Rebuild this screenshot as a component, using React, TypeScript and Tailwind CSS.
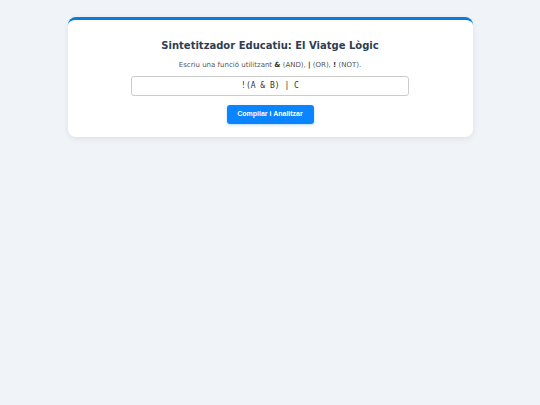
import React from "react";

export default function App() {
  return (
    <div className="min-h-[405px] bg-[#f0f4f8] pt-[17px]" style={{ fontFamily: '"DejaVu Sans", sans-serif' }}>
      <div className="mx-auto w-[405px] rounded-[8px] border-t-[3px] border-[#0a7bd8] bg-white shadow-[0_2px_6px_rgba(0,0,0,0.08)] px-[20px] pt-[19px] pb-[13px] flex flex-col items-center">
        <h1 className="text-[10px] font-bold text-[#2c3e50] leading-[14px]">Sintetitzador Educatiu: El Viatge Lògic</h1>
        <p className="mt-[7px] text-[7px] text-[#555] leading-[10px]">
          Escriu una funció utilitzant <b className="text-[#333]">&amp;</b> (AND), <b className="text-[#333]">|</b> (OR), <b className="text-[#333]">!</b> (NOT).
        </p>
        <div className="mt-[6px] w-[278px] h-[20px] rounded-[3px] border border-[#ccc] flex items-center justify-center text-[8px] text-[#333]" style={{ fontFamily: '"DejaVu Sans Mono", monospace' }}>
          !(A &amp; B) | C
        </div>
        <button className="mt-[9px] w-[87px] h-[19px] rounded-[3px] bg-[#0a84ff] text-white text-[7px] font-bold shadow-[0_1px_3px_rgba(0,123,255,0.3)]" style={{ fontFamily: '"Liberation Sans", sans-serif' }}>
          Compilar i Analitzar
        </button>
      </div>
    </div>
  );
}
